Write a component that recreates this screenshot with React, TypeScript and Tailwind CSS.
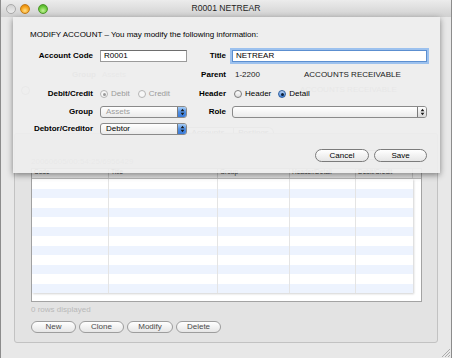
import React from "react";

type RadioProps = { checked?: boolean; blue?: boolean; disabled?: boolean };

function Radio({ checked, blue, disabled }: RadioProps) {
  const ring = blue
    ? "border-[#2f5f9e] bg-gradient-to-b from-[#b9d3f3] to-[#3f82dc]"
    : disabled
    ? "border-[#b4b4b4] bg-[#f7f7f7]"
    : "border-[#7d7d7d] bg-gradient-to-b from-white to-[#dedede]";
  return (
    <span className={`flex h-[8px] w-[8px] shrink-0 items-center justify-center rounded-full border ${ring}`}>
      {checked && <span className={`h-[3px] w-[3px] rounded-full ${blue ? "bg-[#0d1f36]" : "bg-[#9a9a9a]"}`} />}
    </span>
  );
}

function Arrows({ color }: { color: string }) {
  return (
    <svg width="5" height="8" viewBox="0 0 5 8">
      <path d="M2.5 0.8 L4.4 3.2 H0.6 Z M2.5 7.2 L4.4 4.8 H0.6 Z" fill={color} />
    </svg>
  );
}

function Popup({ value, width, disabled, blue }: { value?: string; width: string; disabled?: boolean; blue?: boolean }) {
  return (
    <div className={`flex h-[12px] ${width} items-stretch overflow-hidden rounded-[3px] border border-[#8a8a8a] bg-gradient-to-b from-white to-[#ebebeb]`}>
      <span className={`flex flex-1 items-center pl-[5px] ${disabled ? "text-[#9c9c9c]" : "text-black"}`}>{value}</span>
      <span
        className={`flex w-[9px] items-center justify-center border-l border-[#7a7a7a] ${
          blue ? "bg-gradient-to-b from-[#a6cdf6] via-[#4f8fe3] to-[#3a7ad8]" : "bg-gradient-to-b from-white to-[#d9d9d9]"
        }`}
      >
        <Arrows color="#1b1b1b" />
      </span>
    </div>
  );
}

function PillButton({ label, width, faded }: { label: string; width: string; faded?: boolean }) {
  return (
    <button
      className={`flex ${width} items-center justify-center rounded-full border bg-gradient-to-b from-white to-[#e6e6e6] ${
        faded ? "h-[12px] border-[#9d9d9d] text-[#4a4a4a]" : "h-[13px] border-[#7b7b7b] text-black"
      }`}
    >
      {label}
    </button>
  );
}

const rows = Array.from({ length: 12 }, (_, i) => i);

export default function App() {
  return (
    <div className="relative h-[358px] w-[452px] overflow-hidden border-x border-[#8c8c8c] bg-[#e8e8e8] font-['Liberation_Sans',Arial,sans-serif] text-[8px] leading-none text-black">
      {/* Title bar */}
      <div className="grid h-[17px] grid-cols-[60px_1fr_60px] items-center bg-gradient-to-b from-[#ececec] to-[#d0d0d0]">
        <div className="flex items-center gap-[4px] pl-[5px]">
          <span className="h-[10px] w-[10px] rounded-full border border-[#a9a9a9] bg-gradient-to-b from-[#d2d2d2] to-[#ececec]" />
          <span className="h-[10px] w-[10px] rounded-full border border-[#c27a16] bg-[radial-gradient(circle_at_50%_70%,#ffe08a,#f6a21a_55%,#d77a06)]" />
          <span className="ml-[4px] h-[10px] w-[10px] rounded-full border border-[#4d962a] bg-[radial-gradient(circle_at_50%_70%,#c6f29a,#6ccb3c_55%,#3e9a1e)]" />
        </div>
        <div className="text-center text-[8.6px] text-[#1e1e1e]">R0001 NETREAR</div>
        <div />
      </div>

      {/* Underlying window */}
      <div className="flex flex-col px-[13px]">
        <div className="mt-[54px] flex h-[8px] items-center">
          <span className="ml-[58px] font-bold text-[#8a8a8a]">Group</span>
          <span className="ml-[6px] text-[#9a9a9a]">Assets</span>
        </div>
        <div className="mt-[7px] flex h-[8px] items-center">
          <span className="ml-[7px] h-[9px] w-[9px] rounded-full border border-[#9a9a9a]" />
          <span className="ml-[270px] text-[#8a8a8a]">ACCOUNTS RECEIVABLE</span>
        </div>
        <div className="mt-[33px] flex h-[12px] items-stretch self-center pl-[4px]">
          <span className="flex w-[52px] items-center justify-center rounded-l-full border border-[#a8a8a8] bg-gradient-to-b from-white to-[#e2e2e2] text-[#555]">
            Accounts
          </span>
          <span className="flex w-[40px] items-center justify-center rounded-r-full border border-l-0 border-[#a8a8a8] bg-gradient-to-b from-white to-[#e2e2e2] text-[#555]">
            Postings
          </span>
        </div>

        {/* Group box */}
        <div className="mt-[-6px] flex h-[210px] flex-col rounded-[3px] border border-[#c2c2c2] bg-[#e3e3e3] pl-[16px]">
          <div className="mt-[16px] flex h-[17px] items-end justify-between pr-[26px]">
            <span className="pb-[1px] text-[#9a9a9a]">20060605/00:54:25/6956429</span>
            <span className="mb-[7px] flex h-[10px] w-[98px] items-center rounded-full border border-[#a0a0a0] bg-white pl-[6px] text-[#a0a0a0]">
              Q- Ch
            </span>
          </div>
          {/* Table */}
          <div className="mt-[1px] flex h-[134px] w-[391px] flex-col border border-[#a3a3a3] bg-white">
            <div className="flex h-[10px] items-start border-b border-[#b9b9b9] bg-gradient-to-b from-[#fafafa] to-[#dedede] text-[6.5px] text-[#444]">
              <span className="h-full w-[77px] border-r border-[#c4c4c4] pl-[2px]">Code</span>
              <span className="h-full w-[109px] border-r border-[#c4c4c4] pl-[2px]">Title</span>
              <span className="h-full w-[72px] border-r border-[#c4c4c4] pl-[2px]">Group</span>
              <span className="h-full w-[66px] border-r border-[#c4c4c4] pl-[2px]">Header/Detail</span>
              <span className="h-full w-[57px] border-r border-[#c4c4c4] pl-[2px]">Debit/Credit</span>
            </div>
            <div className="flex">
              <div className="flex w-[381px] flex-col shadow-[1px_1px_2px_rgba(0,0,0,0.18)]">
                {rows.map((i) => (
                  <div key={i} className={`flex h-[9.5px] ${i % 2 === 0 ? "bg-white" : "bg-[#edf3fe]"}`}>
                    <span className="w-[77px] border-r border-[#e4e4e4]" />
                    <span className="w-[109px] border-r border-[#e4e4e4]" />
                    <span className="w-[72px] border-r border-[#e4e4e4]" />
                    <span className="w-[66px] border-r border-[#e4e4e4]" />
                    <span className="flex-1" />
                  </div>
                ))}
              </div>
            </div>
          </div>
          <div className="mt-[4px] h-[8px] text-[#b9b9b9]">0 rows displayed</div>
          <div className="mt-[7px] flex gap-[3px]">
            <PillButton label="New" width="w-[45px]" faded />
            <PillButton label="Clone" width="w-[45px]" faded />
            <PillButton label="Modify" width="w-[46px]" faded />
            <PillButton label="Delete" width="w-[45px]" faded />
          </div>
        </div>
      </div>

      {/* Resize grip */}
      <svg className="absolute bottom-[1px] right-[1px]" width="9" height="9" viewBox="0 0 9 9">
        <path d="M1 9 L9 1 M4 9 L9 4 M7 9 L9 7" stroke="#9a9a9a" strokeWidth="0.8" />
      </svg>

      {/* Sheet */}
      <div className="absolute left-[12px] top-[17px] flex h-[156px] w-[427px] flex-col bg-[#eeeeee]/[0.93] shadow-[0_2px_6px_rgba(0,0,0,0.45)]">
        <div className="mt-[13px] flex h-[10px] items-center pl-[17px]">
          MODIFY ACCOUNT – You may modify the following information:
        </div>

        <div className="mt-[10px] flex h-[12px] items-center">
          <span className="w-[80px] text-right font-bold">Account Code</span>
          <div className="ml-[7px] flex h-[12px] w-[87px] items-center border border-[#9a9a9a] border-t-[#6e6e6e] bg-white pl-[3px]">
            R0001
          </div>
          <span className="w-[39px] text-right font-bold">Title</span>
          <div className="ml-[6px] flex h-[12px] w-[195px] items-center border border-[#5c8fd0] bg-white pl-[3px] shadow-[0_0_0_2px_#9cc1ee]">
            NETREAR
          </div>
        </div>

        <div className="mt-[7px] flex h-[12px] items-center">
          <span className="w-[80px]" />
          <span className="ml-[7px] w-[87px]" />
          <span className="w-[39px] text-right font-bold">Parent</span>
          <span className="ml-[9px] w-[69px] text-[#1a1a1a]">1-2200</span>
          <span className="text-[#1a1a1a]">ACCOUNTS RECEIVABLE</span>
        </div>

        <div className="mt-[7px] flex h-[12px] items-center">
          <span className="w-[80px] text-right font-bold">Debit/Credit</span>
          <div className="ml-[7px] flex w-[87px] items-center">
            <Radio checked disabled />
            <span className="ml-[3px] text-[#9a9a9a]">Debit</span>
            <span className="ml-[8px]">
              <Radio disabled />
            </span>
            <span className="ml-[3px] text-[#9a9a9a]">Credit</span>
          </div>
          <span className="w-[39px] text-right font-bold">Header</span>
          <div className="ml-[8px] flex items-center">
            <Radio />
            <span className="ml-[3px]">Header</span>
            <span className="ml-[7px]">
              <Radio checked blue />
            </span>
            <span className="ml-[3px]">Detail</span>
          </div>
        </div>

        <div className="mt-[6px] flex h-[12px] items-center">
          <span className="w-[80px] text-right font-bold">Group</span>
          <div className="ml-[7px]">
            <Popup value="Assets" width="w-[87px]" disabled blue />
          </div>
          <span className="w-[39px] text-right font-bold">Role</span>
          <div className="ml-[6px]">
            <Popup width="w-[195px]" />
          </div>
        </div>

        <div className="mt-[5px] flex h-[12px] items-center">
          <span className="w-[80px] text-right font-bold">Debtor/Creditor</span>
          <div className="ml-[7px]">
            <Popup value="Debtor" width="w-[87px]" blue />
          </div>
        </div>

        <div className="mt-[14px] flex justify-end gap-[5px] pr-[13px]">
          <PillButton label="Cancel" width="w-[54px]" />
          <PillButton label="Save" width="w-[53px]" />
        </div>
      </div>
    </div>
  );
}
